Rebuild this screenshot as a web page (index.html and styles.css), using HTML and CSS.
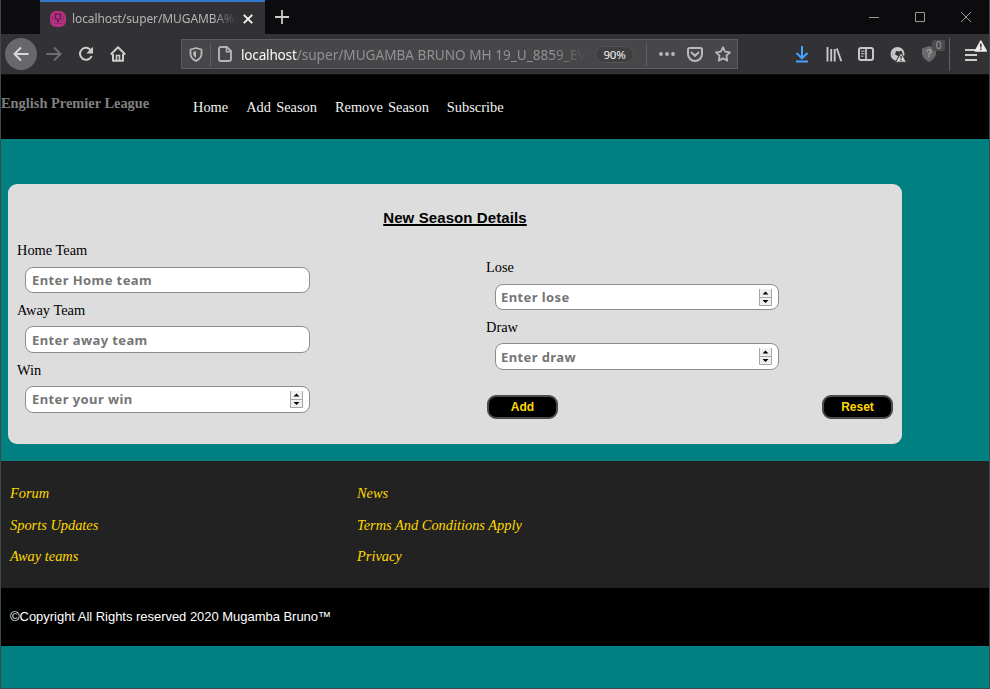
FILE: index.html
```html
<!DOCTYPE html>
<html lang="en">
<head>
<meta charset="utf-8">
<title>English Premier League</title>
<link rel="stylesheet" href="styles.css">
</head>
<body>
<div class="window">
  <div class="tabbar">
    <div class="tab">
      <svg class="favicon" width="16" height="16" viewBox="0 0 16 16"><rect width="16" height="16" rx="6" fill="#b5307e"/><path d="M5.500 3h5v5h-5z" fill="none" stroke="#5a1a4b" stroke-width="1.200"/><path d="M7 9h2v2H7z" fill="#5a1a4b"/><path d="M2.500 5v4M13.500 5v4M4 12.500h8" stroke="#8b2a6c"/></svg>
      <span class="tab-title">localhost/super/MUGAMBA%2</span>
      <svg class="tab-close" width="10" height="10" viewBox="0 0 10 10"><path d="M.8.8l8.400 8.400M9.200.8L.8 9.200" stroke="#f5f5f5" stroke-width="1.900"/></svg>
    </div>
    <svg class="new-tab" width="14" height="14" viewBox="0 0 14 14"><path d="M7 0v14M0 7h14" stroke="#ccc" stroke-width="1.800"/></svg>
    <svg class="win-controls" width="104" height="12" viewBox="0 0 104 12"><path d="M0 6.500h10M46.500 1.500h9v9h-9zM92 1l10 10M102 1L92 11" fill="none" stroke="#999"/></svg>
  </div>

  <div class="toolbar">
    <div class="back"><svg width="16" height="16" viewBox="0 0 16 16"><path d="M15.500 8H1.500M8 1.500L1.500 8 8 14.500" fill="none" stroke="#d8d8da" stroke-width="2"/></svg></div>
    <svg class="forward" width="16" height="16" viewBox="0 0 16 16"><path d="M.5 8h14M8 1.500L14.500 8 8 14.500" fill="none" stroke="#6e6e70" stroke-width="2"/></svg>
    <svg class="reload" width="16" height="16" viewBox="0 0 16 16"><path d="M13 4.500A6 6 0 1 0 13.600 10" fill="none" stroke="#ccc" stroke-width="2"/><path d="M15 .8v6.700H8.300z" fill="#ccc"/></svg>
    <svg class="home" width="16" height="16" viewBox="0 0 16 16"><path d="M.8 8.500L8 1.300l7.200 7.200M3 8v6.800h10V8" fill="none" stroke="#ccc" stroke-width="2" stroke-linejoin="round"/><path d="M6.500 15V9.500h3V15" fill="none" stroke="#ccc" stroke-width="1.600"/></svg>
    <div class="urlbar">
      <svg class="shield" width="14" height="15" viewBox="0 0 14 15"><path d="M7 1L12.500 2.500V7c0 3.500-2.500 5.500-5.500 7C4 12.500 1.500 10.500 1.500 7V2.500z" fill="none" stroke="#b9b9bb" stroke-width="1.800" stroke-linejoin="round"/><path d="M7 4v7C5 9.800 4.300 8.500 4.300 7V4.700z" fill="#b9b9bb"/></svg>
      <span class="sep"></span>
      <svg class="page-icon" width="14" height="16" viewBox="0 0 14 16"><path d="M2.800 1h6L13 5.200v8a1.800 1.800 0 0 1-1.800 1.800H2.800A1.800 1.800 0 0 1 1 13.200V2.800A1.800 1.800 0 0 1 2.800 1z" fill="none" stroke="#b5b5b7" stroke-width="1.900"/><path d="M8.500 1v4.700H13" fill="none" stroke="#b5b5b7" stroke-width="1.500"/></svg>
      <span class="url"><b>localhost</b>/super/MUGAMBA BRUNO MH 19_U_8859_EV</span>
      <span class="zoom">90%</span>
      <span class="sep sep-right"></span>
      <svg class="dots" width="18" height="4" viewBox="0 0 18 4"><g fill="#b9b9bb"><circle cx="3" cy="2" r="1.900"/><circle cx="9" cy="2" r="1.900"/><circle cx="15" cy="2" r="1.900"/></g></svg>
      <svg class="pocket" width="16" height="15" viewBox="0 0 16 15"><path d="M2.500 1h11A1.500 1.500 0 0 1 15 2.500V7A7 7 0 0 1 1 7V2.500A1.500 1.500 0 0 1 2.500 1z" fill="none" stroke="#b9b9bb" stroke-width="2"/><path d="M4.500 5.500L8 8.800l3.500-3.300" fill="none" stroke="#b9b9bb" stroke-width="2" stroke-linecap="round"/></svg>
      <svg class="star" width="16" height="16" viewBox="0 0 16 16"><path d="M8 1.200l2.100 4.500 4.900.6-3.600 3.400.9 4.900L8 12.200l-4.300 2.400.9-4.900L1 6.300l4.900-.6z" fill="none" stroke="#b9b9bb" stroke-width="1.800" stroke-linejoin="round"/></svg>
    </div>
    <div class="tools">
      <svg width="14" height="17" viewBox="0 0 14 17"><path d="M7 0v12M1.500 7L7 12.300 12.500 7M1 15.500h12" fill="none" stroke="#45a1ff" stroke-width="2"/></svg>
      <svg width="16" height="15" viewBox="0 0 16 15"><path d="M1.500 0v14.500M5.200 2v12.500M8.700 2v12.500M10.800 1.500l4.500 12.800" fill="none" stroke="#c8c8ca" stroke-width="1.900"/></svg>
      <svg width="16" height="14" viewBox="0 0 16 14"><rect x="1" y="1" width="14" height="12" rx="2" fill="none" stroke="#c8c8ca" stroke-width="2"/><path d="M8 1v12" stroke="#c8c8ca" stroke-width="1.700"/><path d="M3 4.200h3.500M3 6.700h3.500M3 9.200h2.500" stroke="#c8c8ca"/></svg>
      <svg width="17" height="17" viewBox="0 0 17 17"><circle cx="7.500" cy="8" r="6" fill="none" stroke="#c8c8ca" stroke-width="2"/><path d="M2.500 4.500Q7 0 12 4L9.500 5.500 6 5 5 8.500 8 10v4q-4 0-5.500-4z" fill="#c8c8ca"/><path d="M11 6.500l5.500 9.700h-11z" fill="#d8d8da" stroke="#323234"/><path d="M11 9.700v3M11 13.700v1.300" stroke="#323234" stroke-width="1.400"/></svg>
      <div class="noscript"><svg width="16" height="16" viewBox="0 0 16 16"><path d="M8 0l7 2.500V7c0 4-3 7-7 9-4-2-7-5-7-9V2.500z" fill="#69696b"/></svg><span class="question">?</span><span class="badge">0</span></div>
    </div>
    <span class="tool-divider"></span>
    <div class="menu">
      <svg width="24" height="24" viewBox="0 0 24 24"><path d="M0 13h13M0 18h12M0 23h12" stroke="#ccc" stroke-width="1.800"/><path d="M15.800 4l5.500 10h-11z" fill="#eee" stroke="#eee" stroke-width="1.500" stroke-linejoin="round"/><path d="M15.800 6.500v4M15.800 11.500v1.600" stroke="#333" stroke-width="1.500"/></svg>
    </div>
  </div>

  <nav class="nav">
    <span class="brand">English Premier League</span>
    <div class="links"><a>Home</a><a>Add Season</a><a>Remove Season</a><a>Subscribe</a></div>
  </nav>

  <main class="main">
    <form class="card">
      <h1><span>New Season Details</span></h1>
      <div class="columns">
        <div class="col">
          <label>Home Team</label>
          <div class="field"><input placeholder="Enter Home team"></div>
          <label>Away Team</label>
          <div class="field"><input placeholder="Enter away team"></div>
          <label>Win</label>
          <div class="field"><input placeholder="Enter your win"><svg class="spin" width="13" height="17" viewBox="0 0 13 17"><path d="M0 0h13v17H0z" fill="#f0f0f0"/><path d="M.5 0v16.500h12V0M0 8.500h13" fill="none" stroke="#a6a6a6"/><path d="M6.500 2.500l3 3h-6zM6.500 14l3-3h-6z" fill="#000"/></svg></div>
        </div>
        <div class="col col-right">
          <label>Lose</label>
          <div class="field"><input placeholder="Enter lose"><svg class="spin" width="13" height="17" viewBox="0 0 13 17"><path d="M0 0h13v17H0z" fill="#f0f0f0"/><path d="M.5 0v16.500h12V0M0 8.500h13" fill="none" stroke="#a6a6a6"/><path d="M6.500 2.500l3 3h-6zM6.500 14l3-3h-6z" fill="#000"/></svg></div>
          <label>Draw</label>
          <div class="field"><input placeholder="Enter draw"><svg class="spin" width="13" height="17" viewBox="0 0 13 17"><path d="M0 0h13v17H0z" fill="#f0f0f0"/><path d="M.5 0v16.500h12V0M0 8.500h13" fill="none" stroke="#a6a6a6"/><path d="M6.500 2.500l3 3h-6zM6.500 14l3-3h-6z" fill="#000"/></svg></div>
          <div class="buttons"><button type="button">Add</button><button type="button">Reset</button></div>
        </div>
      </div>
    </form>
  </main>

  <footer class="footer">
    <div class="foot-col"><a>Forum</a><a>Sports Updates</a><a>Away teams</a></div>
    <div class="foot-col"><a>News</a><a>Terms And Conditions Apply</a><a>Privacy</a></div>
  </footer>
  <div class="copyright">©Copyright All Rights reserved 2020 Mugamba Bruno™</div>
</div>
</body>
</html>
```
FILE: styles.css
```css
* { box-sizing: border-box; }
body { margin: 0; font-family: "Liberation Serif", serif; overflow: hidden; }
svg { display: block; flex: none; }
.window {
  width: 990px; height: 689px; display: flex; flex-direction: column;
  background: #008080; border: solid #3c4a4c; border-width: 0 1px 1px;
}

.tabbar { height: 34px; flex: none; background: #0c0c0e; display: flex; align-items: center; }
.tab {
  width: 225px; height: 34px; margin-left: 39px; padding: 2px 12px 0 10px;
  background: #323234; border-top: 2px solid #3377cc; display: flex; align-items: center;
}
.tab-title {
  width: 165px; margin-left: 6px; white-space: nowrap;
  font: 12px/18px "Noto Sans", sans-serif; color: #b5b5b7; letter-spacing: -.1px;
  -webkit-mask-image: linear-gradient(to right, #000 85%, transparent);
  mask-image: linear-gradient(to right, #000 85%, transparent);
}
.tab-close { margin-left: 6px; }
.new-tab { margin-left: 10px; }
.win-controls { margin: 0 16px 0 auto; }

.toolbar {
  height: 41px; flex: none; background: #323234; border-bottom: 1px solid #0c0c0d;
  display: flex; align-items: center;
}
.back {
  width: 32px; height: 32px; margin-left: 4px; border-radius: 50%;
  background: #68686a; display: flex; align-items: center; justify-content: center;
}
.forward { margin-left: 9px; }
.reload { margin-left: 16px; }
.home { margin-left: 16px; }
.urlbar {
  width: 557px; height: 30px; margin-left: 55px; background: #474749;
  border: 1px solid #5c5c5e; display: flex; align-items: center;
}
.shield { margin-left: 7px; }
.sep { width: 1px; height: 23px; margin-left: 7px; background: #606062; }
.page-icon { margin-left: 7px; }
.url {
  width: 346px; margin-left: 9px; padding-top: 2px; white-space: nowrap;
  font: 13.6px/20px "Noto Sans", sans-serif; color: #929294;
  -webkit-mask-image: linear-gradient(to right, #000 90%, transparent);
  mask-image: linear-gradient(to right, #000 90%, transparent);
}
.url b { font-weight: 400; color: #fafafa; letter-spacing: -.2px; }
.zoom {
  width: 39px; height: 17px; margin-left: 8px; border-radius: 9px; background: #3f3f41;
  border: 1px solid #555557; font: 11.5px/16px "Noto Sans", sans-serif; color: #f5f5f5; text-align: center;
  letter-spacing: -.3px;
}
.sep-right { margin-left: 12px; }
.dots { margin-left: 11px; }
.pocket { margin-left: 11px; }
.star { margin-left: 12px; }
.tools { margin-left: 57px; display: flex; align-items: center; gap: 16px; }
.tools > svg:first-child { margin-right: 1px; }
.noscript { position: relative; margin-left: -2px; }
.question {
  position: absolute; left: 0; top: 0; width: 16px;
  font: bold 11px/15px "Liberation Sans", sans-serif; color: #a0a0a2; text-align: center;
}
.badge {
  position: absolute; left: 11px; top: -6px; width: 13px; height: 11px; border-radius: 2px;
  background: #4c4c4e; font: 10px/11px "Noto Sans", sans-serif; color: #9a9a9c; text-align: center;
}
.tool-divider { width: 1px; height: 33px; margin-left: 12px; background: #606062; }
.menu { margin: -10px 0 0 15px; }

.nav { height: 64px; flex: none; background: #000; display: flex; align-items: flex-start; }
.brand { width: 192px; padding-top: 20px; font: bold 14.4px/17px "Liberation Serif", serif; color: #808080; }
.links { padding-top: 24px; display: flex; gap: 18px; font-size: 14.4px; line-height: 17px; color: #f2f2f2; word-spacing: 1.6px; }

.main { height: 322px; flex: none; padding: 45px 0 0 7px; }
.card { width: 894px; height: 260px; padding: 25px 9px 0; background: #ddd; border-radius: 9px; }
h1 { margin: 0; font: bold 15px/18px "Liberation Sans", sans-serif; text-align: center; letter-spacing: .1px; }
h1 span { text-decoration: underline; text-decoration-thickness: 2px; text-underline-offset: 1px; text-decoration-skip-ink: none; }
.columns { display: flex; }
.col { width: 469px; padding-top: 14.7px; }
.col-right { width: 407px; padding-top: 31.7px; }
label { display: block; height: 17px; font-size: 14.4px; line-height: 17px; color: #000; }
.field + label { padding-top: .8px; }
.field { position: relative; width: 285px; margin: 8px 0 8px 8px; }
.col-right .field { width: 284px; margin-left: 9px; }
input {
  display: block; width: 100%; height: 26.7px; padding: 0 6px; border: 1px solid #8d8d8d;
  border-radius: 8px; background: #fff; font: bold 13px/18px "Noto Sans", sans-serif; letter-spacing: .4px;
}
.col-right input { padding-left: 5px; }
input::placeholder { color: #757575; opacity: 1; }
.spin { position: absolute; right: 7px; top: 5px; }
.buttons { display: flex; justify-content: space-between; margin: 25px 0 0 1px; }
button {
  width: 71px; height: 24px; padding: 0; border: 2px solid #4b4b4b; border-radius: 9px;
  background: #000; color: #ffd700; font: bold 12px/18px "Liberation Sans", sans-serif;
}

.footer { height: 127px; flex: none; padding: 24px 9px 0; background: #222; display: flex; }
.foot-col { width: 347px; display: flex; flex-direction: column; gap: 14.5px; font-size: 14.4px; line-height: 17px; font-style: italic; color: #ffd700; }
.copyright { height: 58px; flex: none; padding: 20px 9px 0; background: #000; color: #fff; font: 13px/17px "Liberation Sans", sans-serif; letter-spacing: -.03px; }
```
